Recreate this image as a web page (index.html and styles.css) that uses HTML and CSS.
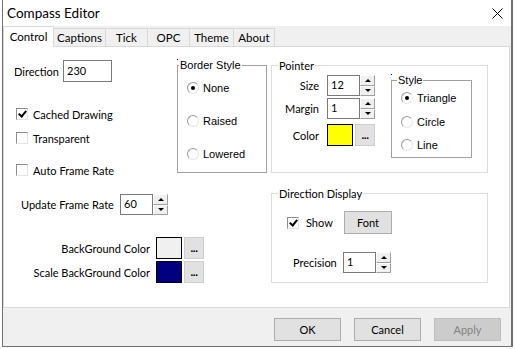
FILE: index.html
```html
<!DOCTYPE html>
<html>
<head>
<meta charset="utf-8">
<title>Compass Editor</title>
<link rel="stylesheet" href="styles.css">
</head>
<body>
<div class="window">
  <div class="titlebar">
    <span class="title">Compass Editor</span>
    <svg class="close" width="11" height="11" viewBox="0 0 11 11"><path d="M0.5 0.5 L10.5 10.5 M10.5 0.5 L0.5 10.5" stroke="#000" stroke-width="1" fill="none"/></svg>
  </div>
  <div class="tabs">
    <div class="tab active">Control</div>
    <div class="tab w-captions">Captions</div>
    <div class="tab w-tick">Tick</div>
    <div class="tab w-opc">OPC</div>
    <div class="tab w-theme">Theme</div>
    <div class="tab w-about">About</div>
  </div>
  <div class="panel">
    <div class="col-left">
      <div class="row-dir">
        <span class="lbl dir-lbl">Direction</span>
        <span class="edit dir-edit">230</span>
      </div>
      <div class="check-row r-cached"><span class="cb checked"></span><span class="ui">Cached Drawing</span></div>
      <div class="check-row r-transp"><span class="cb"></span><span class="ui">Transparent</span></div>
      <div class="check-row r-auto"><span class="cb"></span><span class="ui">Auto Frame Rate</span></div>
      <div class="row-upd">
        <span class="lbl upd-lbl">Update Frame Rate</span>
        <span class="edit spin-edit">60</span>
        <span class="spin"><span class="sb"><i class="up"></i></span><span class="sb"><i class="down"></i></span></span>
      </div>
      <div class="color-row r-bg">
        <span class="lbl color-lbl">BackGround Color</span>
        <span class="swatch sw-bg"></span>
        <span class="dots">...</span>
      </div>
      <div class="color-row r-scale">
        <span class="lbl color-lbl">Scale BackGround Color</span>
        <span class="swatch sw-navy"></span>
        <span class="dots">...</span>
      </div>
    </div>

    <div class="col-mid">
      <div class="group dark bs-group">
        <span class="dot"></span>
        <span class="legend classic">Border Style</span>
        <div class="radios bs-radios">
          <div class="radio-row"><span class="rb on"></span><span class="classic">None</span></div>
          <div class="radio-row"><span class="rb"></span><span class="classic">Raised</span></div>
          <div class="radio-row"><span class="rb"></span><span class="classic">Lowered</span></div>
        </div>
      </div>
    </div>

    <div class="col-right">
      <div class="group light ptr-group">
        <span class="legend ui leg-ptr">Pointer</span>
        <div class="ptr-body">
          <div class="ptr-fields">
            <div class="field-row">
              <span class="lbl plbl">Size</span>
              <span class="edit spin-edit">12</span>
              <span class="spin"><span class="sb"><i class="up"></i></span><span class="sb"><i class="down"></i></span></span>
            </div>
            <div class="field-row r-margin">
              <span class="lbl plbl">Margin</span>
              <span class="edit spin-edit">1</span>
              <span class="spin"><span class="sb"><i class="up"></i></span><span class="sb"><i class="down"></i></span></span>
            </div>
            <div class="field-row r-color">
              <span class="lbl plbl">Color</span>
              <span class="swatch sw-yellow"></span>
              <span class="dots">...</span>
            </div>
          </div>
          <div class="group dark style-group">
            <span class="dot"></span>
            <span class="legend classic leg-style">Style</span>
            <div class="radios st-radios">
              <div class="radio-row"><span class="rb on"></span><span class="classic">Triangle</span></div>
              <div class="radio-row"><span class="rb"></span><span class="classic">Circle</span></div>
              <div class="radio-row"><span class="rb"></span><span class="classic">Line</span></div>
            </div>
          </div>
        </div>
      </div>

      <div class="group light dd-group">
        <span class="legend ui leg-ptr">Direction Display</span>
        <div class="show-row">
          <span class="show"><span class="cb checked"></span><span class="ui">Show</span></span>
          <span class="btn font-btn">Font</span>
        </div>
        <div class="prec-row">
          <span class="lbl prec-lbl">Precision</span>
          <span class="edit spin-edit">1</span>
          <span class="spin"><span class="sb"><i class="up"></i></span><span class="sb"><i class="down"></i></span></span>
        </div>
      </div>
    </div>
  </div>
  <div class="footer">
    <span class="btn fbtn">OK</span>
    <span class="btn fbtn">Cancel</span>
    <span class="btn fbtn disabled">Apply</span>
  </div>
</div>
</body>
</html>
```
FILE: styles.css
```css
* { box-sizing: border-box; }
html, body { margin: 0; padding: 0; }
body {
  width: 515px;
  height: 349px;
  background: #ffffff;
  overflow: hidden;
  font-family: "Lato", "Segoe UI", sans-serif;
  font-size: 11px;
  color: #000;
}
.window {
  margin-left: 2px;
  width: 511px;
  height: 347px;
  border-left: 1px solid #707070;
  border-right: 2px solid #707070;
  border-bottom: 1px solid #707070;
  background: #f0f0f0;
  display: flex;
  flex-direction: column;
}
.titlebar {
  height: 26px;
  background: #fff;
  display: flex;
  align-items: center;
  padding-left: 4px;
  position: relative;
}
.title { font-size: 13.5px; line-height: 16px; }
.close { margin-left: auto; margin-right: 8px; }

.tabs {
  height: 20px;
  display: flex;
  align-items: flex-end;
  position: relative;
  z-index: 2;
}
.tab {
  height: 18px;
  border: 1px solid #d9d9d9;
  border-bottom: none;
  margin-left: -1px;
  background: #f0f0f0;
  text-align: center;
  line-height: 18px;
  font-size: 11.5px;
  flex: none;
}
.tab.active {
  margin-left: 0;
  width: 51px;
  height: 21px;
  background: #fff;
  margin-bottom: -1px;
  line-height: 19px;
  position: relative;
  z-index: 3;
}
.w-captions { width: 53px; }
.w-tick { width: 43px; }
.w-opc { width: 43px; }
.w-theme { width: 45px; }
.w-about { width: 42px; }

.panel {
  width: 507px;
  height: 262px;
  background: #fff;
  border: 1px solid #d9d9d9;
  display: flex;
  align-items: flex-start;
  flex: none;
}

.lbl { white-space: nowrap; flex: none; }
.ui { white-space: nowrap; }
.classic { font-family: "Liberation Sans", Arial, sans-serif; font-size: 11px; white-space: nowrap; }

/* left column */
.col-left {
  width: 173px;
  flex: none;
  padding-top: 13px;
  display: flex;
  flex-direction: column;
}
.row-dir { display: flex; align-items: center; padding-left: 10px; height: 22px; }
.dir-lbl { width: 49px; }
.edit {
  display: inline-block;
  flex: none;
  background: #fff;
  border: 1px solid #7a7a7a;
  padding-left: 3px;
  line-height: 18px;
  height: 21px;
}
.dir-edit { width: 49px; height: 22px; line-height: 19px; }
.spin-edit { width: 33px; }

.check-row { display: flex; align-items: center; height: 16px; padding-left: 12px; }
.r-cached { margin-top: 24px; }
.r-transp { margin-top: 8px; }
.r-auto { margin-top: 16px; }
.cb {
  width: 12px; height: 12px;
  border: 1px solid;
  border-color: #8c8c8c #e3e3e3 #e3e3e3 #8c8c8c;
  background: #fff;
  margin-right: 5px;
  position: relative;
  flex: none;
}
.cb.checked::after {
  content: "";
  position: absolute;
  left: 3px; top: 0px;
  width: 3px; height: 6px;
  border: solid #000;
  border-width: 0 2px 2px 0;
  transform: rotate(40deg);
}

.row-upd { display: flex; align-items: center; margin-top: 16px; padding-left: 17px; height: 21px; }
.upd-lbl { width: 99px; }

.spin { display: flex; flex-direction: column; width: 15px; height: 21px; flex: none; }
.sb {
  flex: 1;
  background: #f0f0f0;
  border: 1px solid;
  border-color: #fff #a0a0a0 #a0a0a0 #fff;
  display: flex;
  align-items: center;
  justify-content: center;
}
.sb i { width: 0; height: 0; border-left: 3px solid transparent; border-right: 3px solid transparent; }
.sb i.up { border-bottom: 3px solid #000; }
.sb i.down { border-top: 3px solid #000; }

.color-row { display: flex; align-items: center; height: 22px; }
.r-bg { margin-top: 22px; }
.r-scale { margin-top: 2px; }
.color-lbl { width: 146px; text-align: right; margin-right: 6px; }
.swatch { width: 26px; height: 22px; border: 1px solid #000; flex: none; }
.sw-bg { background: #f0f0f0; }
.sw-navy { background: #000080; }
.sw-yellow { background: #ffff00; }
.dots {
  flex: none;
  width: 20px; height: 22px;
  margin-left: 2px;
  background: #e1e1e1;
  border: 1px solid #cfcfcf;
  font-family: "Liberation Sans", Arial, sans-serif;
  font-size: 10px;
  font-weight: bold;
  text-align: center;
  line-height: 22px;
  letter-spacing: -0.5px;
}

/* groups */
.group { position: relative; flex: none; }
.group.dark { border: 1px solid #a0a0a0; }
.group.light { border: 1px solid #dcdcdc; }
.legend {
  position: absolute;
  top: -7px;
  left: 1px;
  background: #fff;
  padding: 0 1px;
  line-height: 13px;
}
.leg-ptr { left: 6px; top: -8px; line-height: 15px; }
.leg-style { left: 5px; }
.dot {
  position: absolute;
  left: -1px; top: -7px;
  width: 1px; height: 1px;
  background: #000;
}

.col-mid { margin-top: 18px; flex: none; }
.bs-group { width: 90px; height: 108px; }
.radios { display: flex; flex-direction: column; padding-left: 9px; }
.radio-row { display: flex; align-items: center; height: 14px; }
.bs-radios { padding-top: 15px; gap: 19px; }
.rb {
  width: 12px; height: 12px;
  border-radius: 50%;
  border: 1px solid;
  border-color: #9a9a9a #e6e6e6 #e6e6e6 #9a9a9a;
  background: #fff;
  margin-right: 4px;
  position: relative;
  flex: none;
}
.rb.on::after {
  content: "";
  position: absolute;
  left: 3px; top: 3px;
  width: 4px; height: 4px;
  border-radius: 50%;
  background: #000;
}

.col-right { margin-left: 4px; margin-top: 18px; width: 217px; flex: none; }
.ptr-group { width: 217px; height: 108px; }
.ptr-body { display: flex; align-items: flex-start; }
.ptr-fields { width: 104px; flex: none; margin-top: 9px; display: flex; flex-direction: column; }
.field-row { display: flex; align-items: center; height: 21px; }
.r-margin { margin-top: 2px; }
.r-color { margin-top: 5px; height: 22px; }
.plbl { width: 47px; text-align: right; margin-right: 8px; }
.style-group { width: 81px; height: 78px; margin-left: 15px; margin-top: 14px; }
.st-radios { padding-top: 10px; gap: 9.5px; }

.dd-group { width: 217px; height: 90px; margin-top: 20px; }
.show-row { display: flex; align-items: center; margin-top: 17px; height: 23px; padding-left: 15px; }
.show { width: 57px; display: flex; align-items: center; flex: none; }
.show .cb { margin-right: 7px; }
.btn {
  display: inline-flex;
  align-items: center;
  justify-content: center;
  background: #e1e1e1;
  border: 1px solid #adadad;
  flex: none;
}
.font-btn { width: 48px; height: 23px; }
.prec-row { display: flex; align-items: center; margin-top: 18px; height: 21px; padding-left: 21px; }
.prec-lbl { width: 50px; }

.footer {
  flex: 1;
  display: flex;
  justify-content: flex-end;
  align-items: flex-start;
  padding-top: 10px;
  padding-right: 10px;
  gap: 13px;
}
.fbtn { width: 67px; height: 23px; }
.fbtn.disabled { background: #cccccc; border-color: #bfbfbf; color: #838383; }
```
